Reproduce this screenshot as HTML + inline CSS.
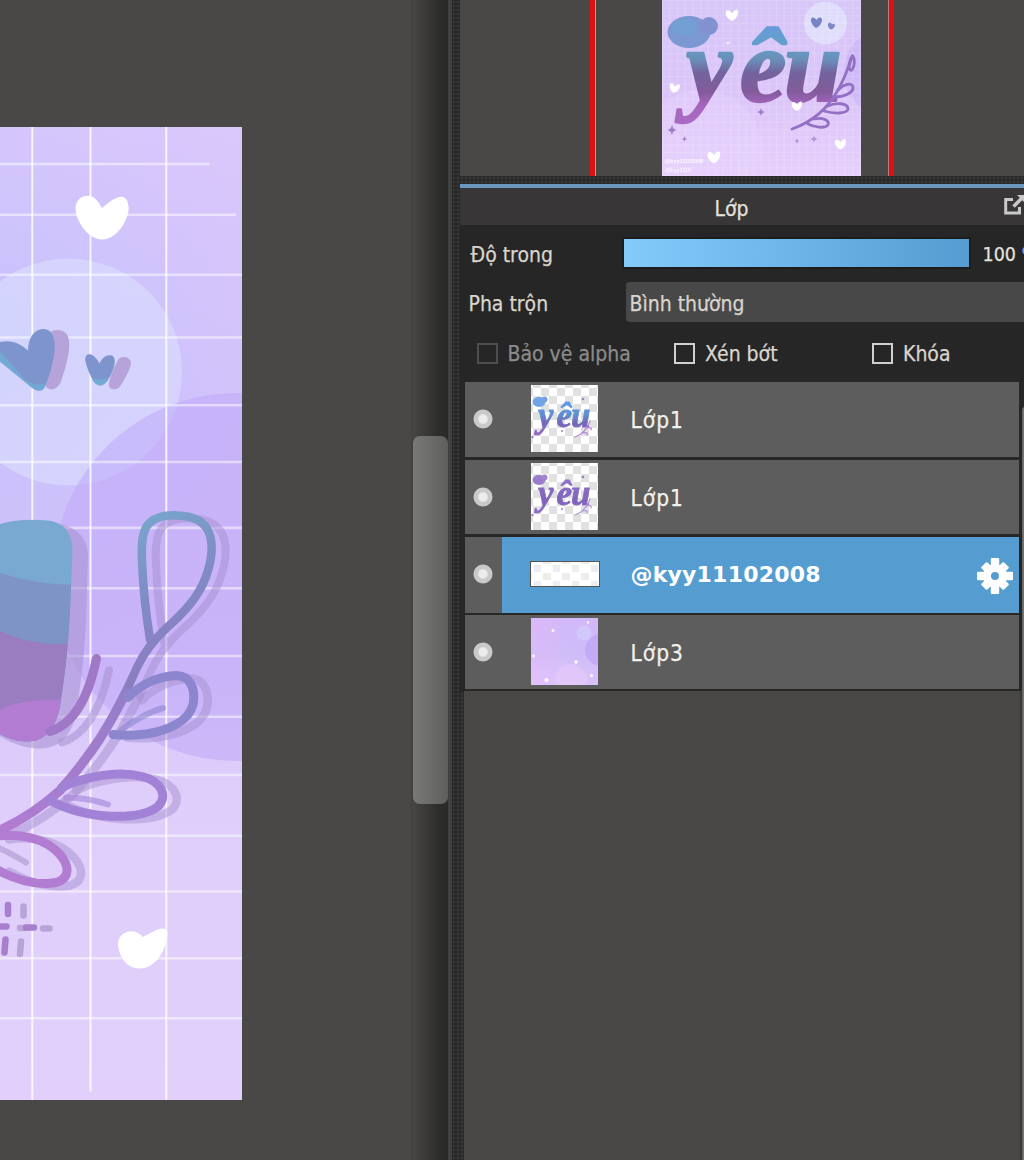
<!DOCTYPE html>
<html lang="vi">
<head>
<meta charset="utf-8">
<title>Lớp</title>
<style>
*{box-sizing:border-box;margin:0;padding:0}
html,body{width:1024px;height:1160px;overflow:hidden;background:#4a4846}
body{position:relative;font-family:"DejaVu Sans Condensed","Liberation Sans",sans-serif;font-size:21px;color:#d9d5cd}
.abs{position:absolute}
.t{position:absolute;white-space:nowrap;line-height:26px;height:26px;margin-top:.7px;-webkit-text-stroke:.25px currentColor}
/* scrollbar column */
#trackedge{left:411px;top:0;width:3px;height:1160px;background:#43423f}
#track{left:413px;top:0;width:35px;height:1160px;background:linear-gradient(90deg,#474644 0%,#3a3937 35%,#2d2d2b 75%,#292928 100%)}
#thumb{left:413px;top:436px;width:35px;height:368px;border-radius:7px;background:linear-gradient(90deg,#787876 0%,#6c6c6a 50%,#5e5e5c 100%)}
#lightline{left:448px;top:0;width:4px;height:1160px;background:#414141}
#dots{left:452px;top:0;width:11.5px;height:1160px;background-color:#272727;background-image:radial-gradient(circle at 2px 2px,rgba(255,255,255,.07) 0 1.2px,transparent 1.8px);background-size:4px 4px}
/* panel */
#navbg{left:460px;top:0;width:564px;height:176px;background:#4a4846}
#hdots{left:456px;top:175.5px;width:568px;height:8.5px;background-color:#272727;background-image:radial-gradient(circle at 2px 2px,rgba(255,255,255,.07) 0 1.2px,transparent 1.8px);background-size:4px 4px}
#blue{left:460px;top:184px;width:564px;height:3.5px;background:#6a97bf}
#title{left:460px;top:187.5px;width:564px;height:38px;background:#383636}
#ctrl{left:460px;top:225px;width:564px;height:157px;background:#272626}
#listbg{left:460px;top:379px;width:564px;height:312px;background:#272727}
#below{left:464px;top:691px;width:560px;height:469px;background:#4a4846}
.row{position:absolute;left:465px;width:553.5px;height:75px;background:#5d5d5d}
.eye{position:absolute;left:7.5px;top:27px;width:20px;height:20px;border-radius:50%;background:radial-gradient(circle,#ececec 0 4px,#c9c9c9 5.5px 9px,rgba(201,201,201,0) 10px)}
.thumb{position:absolute;left:66px;top:3px;width:67px;height:67px;overflow:hidden}
.lname{position:absolute;left:165.500px;top:23px;letter-spacing:1px;-webkit-text-stroke:.25px currentColor;font-size:22.5px;line-height:30px;color:#f2f0ea;white-space:nowrap}
.cb{position:absolute;width:21px;height:21px;border:2.5px solid #d2d0cc}
</style>
</head>
<body>
<!-- canvas artwork -->
<div class="abs" id="art" style="left:0;top:126.5px;width:241.5px;height:973px;overflow:hidden;background:#d8c8fa">
<!--ARTS--><svg class="abs" style="left:0;top:0" width="241.5" height="973" viewBox="0 126.5 241.5 973">
<defs>
<linearGradient id="bgv" x1="0" y1="126" x2="0" y2="1100" gradientUnits="userSpaceOnUse">
<stop offset="0" stop-color="#dbc8fb"/><stop offset=".3" stop-color="#d3c2fa"/><stop offset=".55" stop-color="#d4c2fa"/><stop offset=".68" stop-color="#dfcefb"/><stop offset="1" stop-color="#e2d0fb"/>
</linearGradient>
<radialGradient id="bgh" cx="-20" cy="330" r="330" gradientUnits="userSpaceOnUse">
<stop offset="0" stop-color="#b4beff" stop-opacity=".45"/><stop offset=".6" stop-color="#bcc0ff" stop-opacity=".22"/><stop offset="1" stop-color="#c8c0ff" stop-opacity="0"/>
</radialGradient>
<linearGradient id="ushape" x1="0" y1="519" x2="0" y2="742" gradientUnits="userSpaceOnUse">
<stop offset="0" stop-color="#78aad2"/><stop offset="1" stop-color="#78aad2"/>
</linearGradient>
<linearGradient id="loopg" x1="143" y1="520" x2="212" y2="640" gradientUnits="userSpaceOnUse">
<stop offset="0" stop-color="#78a4cb"/><stop offset=".45" stop-color="#7f8ec6"/><stop offset="1" stop-color="#8b7cc2"/>
</linearGradient>
<linearGradient id="stemg" x1="150" y1="640" x2="0" y2="830" gradientUnits="userSpaceOnUse">
<stop offset="0" stop-color="#8a80c6"/><stop offset=".5" stop-color="#a07ccc"/><stop offset="1" stop-color="#b27cd2"/>
</linearGradient>
<clipPath id="uclip"><path id="upath" d="M-10 528 C5 519 30 518 48 520 C66 522 73 535 72.5 552 L70 610 C68 650 64 680 60 705 C56 728 44 741 28 741 C14 741 4 736 -10 728 Z"/></clipPath>
</defs>
<rect x="0" y="126" width="242" height="975" fill="url(#bgv)"/>
<rect x="0" y="126" width="242" height="975" fill="url(#bgh)"/>
<!-- big soft circles -->
<circle cx="68.5" cy="371.5" r="113.5" fill="#dadeff" fill-opacity=".62"/>
<circle cx="236.5" cy="576.5" r="184" fill="#c0a8f8" fill-opacity=".55"/>
<!-- grid -->
<g stroke="#fff" stroke-opacity=".8" stroke-width="2" fill="none">
<path d="M32.3 126V1100M90.5 126V1091M166.3 126V1100"/>
</g>
<g stroke="#fff" stroke-opacity=".5" stroke-width="2.6" fill="none">
<path d="M0 163.5H209.5M0 214.2H236M0 274.2H242M0 337H242M0 404.7H242M0 461.5H242M0 527.4H242M0 587.7H242M0 655.5H242M0 716.3H242M0 774.5H242M0 835.2H242M0 891H242M0 957.7H242M0 1017.7H242"/>
</g>
<!-- white hearts -->
<path id="wh" d="M102.2 207.7 C99 202 95 196 89.5 195.4 C81 194.5 75 201 75.6 209 C76 216 79 221 82 226 C87 233 94 239 102.2 239 C111 239 118 232 122.5 225.5 C127 218 129.5 211 128.4 205 C127.5 198 124 196 121 196.3 C114 197 107 203 102.2 207.7Z" fill="#fff"/>
<path d="M143 936.4 C140 933 136 930.5 131 930.7 C123 931 117.5 937 118 944.5 C118.5 950 120 954 122.5 958 C126 964 132 968 139.5 968 C147 968 153 964 157.5 959 C162 953 164.5 948 165.5 943 C167.500 937 169 930.500 165.500 928.500 C162 927 156.500 929 152.500 931.500 C148.500 933.500 145.500 935 143 936.4Z" fill="#fff"/>
<!-- small blue hearts (shadow then main) -->
<g fill="#b5a3d9">
<path d="M47 335 C52 328 62 328 67 334 C72 342 68 360 62 378 C60 386 54 391 48 388 C44 386 44 378 45 370Z"/>
<path d="M119 358 C124 355 130 357 131 362 C131 368 124 380 120 386 C117 390 111 390 109 386 C108 380 114 366 119 358Z"/>
</g>
<path d="M-6 344 C4 338 18 340 28 350 C28 338 34 328 44 328.5 C54 329 56 342 54 354 C52 368 48 380 44 388 C40 392 34 390 28 384 C16 374 2 362 -6 356Z" fill="#7d95cc"/>
<path d="M-6 344 C0 350 10 362 22 376 C30 384 38 386 46 382 C45 386 44 388 43 389 C40 392 34 390 28 384 C16 374 2 362 -6 358Z" fill="#6fb0d6" fill-opacity=".7"/>
<path d="M85.5 361 C84 354 89 352.5 93 355 C96 357 98 360 99.5 363 C102 357 107 353.5 112 355 C116 357 115 364 113 369 C110 377 106 384 101 385 C96 385 93 381 91 376 C88 370 86.5 365 85.5 361Z" fill="#7d95cc"/>
<path d="M92 377 C96 380 104 380 108 376 C106 381 104 384.5 101 385 C97 385 94 382 92 377Z" fill="#6fb0d6" fill-opacity=".8"/>
<!-- u-shape shadow -->
<path d="M40 524 C66 520 88 530 88 556 L86 620 C84 660 80 690 76 712 C72 736 58 748 40 748 C26 748 14 744 0 736 L0 720 L40 720Z" fill="#a58fd0" fill-opacity=".55"/>
<!-- u-shape -->
<g clip-path="url(#uclip)">
<rect x="-10" y="510" width="100" height="240" fill="#79a9d1"/>
<path d="M-10 569 C20 580 50 585 80 584 V760 H-10Z" fill="#7e93c6"/>
<path d="M-10 625 C15 640 45 646 80 643 V760 H-10Z" fill="#9a7cc0"/>
<path d="M-10 715 C10 700 40 698 80 700 V760 H-10Z" fill="#b27cd2"/>
</g>
<!-- hook tail of u : shadow + main -->
<path d="M62 742 C84 735 100 712 109 670" fill="none" stroke="#a58fd0" stroke-opacity=".55" stroke-width="8" stroke-linecap="round"/>
<path d="M50 731 C72 724 88 700 96.500 658" fill="none" stroke="#a078c8" stroke-width="9" stroke-linecap="round"/>
<!-- loop + stem shadows -->
<g fill="none" stroke="#a58fd0" stroke-opacity=".5" stroke-linecap="round" stroke-linejoin="round" transform="translate(14 3)">
<path d="M150 639 C147 620 143 590 142 560 C141 540 143 528 150 522 C158 515 170 514.5 178 515 C192 515.5 204 520 209 532 C214 545 211 562 206 576 C199 596 184 612 166 628 C154 639 145 650 137 667 C133 676 129 684 125.6 692" stroke-width="8"/>
<path d="M125.6 692 C118 708 110 722 100 738 C88 756 76 772 60 790 C40 808 18 822 -5 832" stroke-width="9"/>
<path d="M128 697 C138 686 156 676 176 675 C190 675 196 688 193 704 C189 720 170 730 146 733.5 C134 735 122 735 113 734" stroke-width="8.5"/>
<path d="M62 787 C84 776 118 770 142 776 C162 781 168 796 158 806 C140 820 88 820 50 800" stroke-width="8.5"/>
<path d="M-5 836 C20 832 46 838 60 854 C70 866 70 878 56 882 C36 886 12 878 -5 868" stroke-width="8.5"/>
</g>
<!-- loop + stem main -->
<g fill="none" stroke-linecap="round" stroke-linejoin="round">
<path d="M150 639 C147 620 143 590 142 560 C141 540 143 528 150 522 C158 515 170 514.5 178 515 C192 515.5 204 520 209 532 C214 545 211 562 206 576 C199 596 184 612 166 628 C154 639 145 650 137 667 C133 676 129 684 125.6 692" stroke="url(#loopg)" stroke-width="8.5"/>
<path d="M125.6 692 C118 708 110 722 100 738 C88 756 76 772 60 790 C40 808 18 822 -5 832" stroke="url(#stemg)" stroke-width="9.5"/>
<path d="M128 697 C138 686 156 676 176 675 C190 675 196 688 193 704 C189 720 170 730 146 733.5 C134 735 122 735 113 734" stroke="#8c86cf" stroke-width="9"/>
<path d="M121 729.5 C134 720 150 711 163 707.5" stroke="#8c86cf" stroke-opacity=".6" stroke-width="6"/>
<path d="M62 787 C84 776 118 770 142 776 C162 781 168 796 158 806 C140 820 88 820 50 800" stroke="#a182d6" stroke-width="9"/>
<path d="M66 797 C80 797 96 800 108 804" stroke="#a182d6" stroke-opacity=".6" stroke-width="6"/>
<path d="M-5 836 C20 832 46 838 60 854 C70 866 70 878 56 882 C36 886 12 878 -5 868" stroke="#b17cd2" stroke-width="9"/>
<path d="M-5 846 C6 850 16 856 26 862" stroke="#b9a4d8" stroke-opacity=".8" stroke-width="6"/>
</g>
<!-- sparkle dashes -->
<g fill="none" stroke-linecap="round" stroke-width="6.5">
<path d="M23.5 906V915M21 941L20 953.500M43 928H49.500M20 927.500H24" stroke="#b9a4d8"/>
<path d="M8 904.500V913.500M5.5 939L4.5 952M-2 926H6.500M26 927H34" stroke="#a87fcd"/>
</g>
</svg>
<!--ARTE-->
</div>

<!-- scrollbar -->
<div class="abs" id="trackedge"></div>
<div class="abs" id="track"></div>
<div class="abs" id="thumb"></div>
<div class="abs" id="lightline"></div>
<div class="abs" id="dots"></div>

<!-- navigator -->
<div class="abs" id="navbg"></div>
<div class="abs" style="left:590px;top:0;width:4.700px;height:176px;background:#e01010"></div>
<div class="abs" style="left:594.500px;top:0;width:1.2px;height:176px;background:#c9a0a0"></div>
<div class="abs" style="left:889px;top:0;width:5px;height:176px;background:#e01010"></div>
<div class="abs" style="left:888px;top:0;width:1.2px;height:176px;background:#b08080"></div>
<div class="abs" id="nav" style="left:661.5px;top:0;width:199.5px;height:175.5px;overflow:hidden;background:#d8c4f8">
<!--NAVS--><svg class="abs" style="left:0;top:0" width="199.5" height="175.5" viewBox="0 0 199.5 175.5">
<defs>
<linearGradient id="nbg" x1="0" y1="0" x2="0" y2="176" gradientUnits="userSpaceOnUse"><stop offset="0" stop-color="#d7c6f8"/><stop offset=".55" stop-color="#dcc6f9"/><stop offset="1" stop-color="#e6cffb"/></linearGradient>
<linearGradient id="ytxt" x1="0" y1="18" x2="0" y2="136" gradientUnits="userSpaceOnUse">
<stop offset="0" stop-color="#6a98e2"/><stop offset=".24" stop-color="#62a0c8"/><stop offset=".36" stop-color="#6b8cb6"/><stop offset=".46" stop-color="#72649e"/><stop offset=".62" stop-color="#825a9a"/><stop offset=".74" stop-color="#a565bd"/><stop offset="1" stop-color="#b070c8"/>
</linearGradient>
<pattern id="ngrid" width="7.6" height="7.6" patternUnits="userSpaceOnUse"><path d="M0 .5H7.6M.5 0V7.6" stroke="#fff" stroke-opacity=".16" stroke-width="1" fill="none"/></pattern>
<filter id="nblur" x="-5%" y="-5%" width="110%" height="110%"><feGaussianBlur stdDeviation=".7"/></filter>
<path id="nh" d="M0 -1.2C-1 -3.2 -3 -4.4 -4.4 -3.4C-5.8 -2 -4.6 1 -3 2.8C-1.8 4 -.6 4.6 .2 4.6C1.4 4.4 3 3 4 1C5 -1 5.2 -3.6 4 -4.2C2.6 -4.6 1 -3 0 -1.2Z"/>
<path id="nstar" d="M0 -5C.6 -1.6 1.6 -.6 5 0C1.6 .6 .6 1.6 0 5C-.6 1.6 -1.6 .6 -5 0C-1.6 -.6 -.6 -1.6 0 -5Z"/>
</defs>
<rect width="200" height="176" fill="url(#nbg)"/>
<circle cx="228" cy="72" r="46" fill="#c6b0f8" fill-opacity=".55"/>
<circle cx="40" cy="150" r="60" fill="#e8d4fc" fill-opacity=".35"/>
<circle cx="163.5" cy="23" r="21.5" fill="#e2e2fd" fill-opacity=".8"/>
<rect width="200" height="176" fill="url(#ngrid)"/>
<g filter="url(#nblur)">
<ellipse cx="27" cy="32" rx="21.5" ry="16" fill="#7b98d2"/>
<circle cx="47" cy="26" r="9" fill="#8292d0"/>
<ellipse cx="22" cy="27" rx="12" ry="8" fill="#6fa4d4" fill-opacity=".7"/>
<path d="M149 19C150 16.5 153 17 154.5 20C156 17 159 16.5 160 19C160.5 23 157 27 154 28C151 26 148.500 22.500 149 19Z" fill="#7484c4"/>
<path d="M166 24C167 22 169.500 22.500 170 24.500C171 23 173 23.500 173 25.500C172.500 28 170 29.500 168.500 29.500C167 28.500 165.500 26 166 24Z" fill="#7e88c4"/>
<text x="24 78 122" y="101" font-family="'Liberation Serif','DejaVu Serif',serif" font-style="italic" font-weight="bold" font-size="104" fill="url(#ytxt)" stroke="url(#ytxt)" stroke-width="2.5" stroke-linejoin="round">yêu</text>
<g fill="none" stroke="#9470c4" stroke-width="2.8" stroke-linecap="round">
<path d="M130 129C150 122 166 108 176 90C184 76 188 62 190.500 56"/>
<path d="M176 90C182 84 190 82 191 87C191.500 93 182 97 172 97"/>
<path d="M166 106C174 102 186 103 186 109C185 114 172 114 162 111"/>
<path d="M152 119C160 117 168 120 166 125C163 129 152 127 146 124"/>
<path d="M190.500 56C186 62 186 72 190 70C193 66 193 58 190.500 56Z"/>
</g>
<g fill="#a07cc8"><use href="#nstar" transform="translate(99 112) scale(.85)"/><use href="#nstar" transform="translate(10 130) scale(1.1)"/><use href="#nstar" transform="translate(22.500 139) scale(.6)"/><use href="#nstar" transform="translate(135 141) scale(.6)" fill-opacity=".7"/><use href="#nstar" transform="translate(152 139) scale(.8)" fill-opacity=".7"/></g>
<g fill="#fff"><use href="#nh" transform="translate(70 15) scale(1.25)"/><use href="#nh" transform="translate(12.500 88) scale(1.05) rotate(15)"/><use href="#nh" transform="translate(135 106) scale(1.05)"/><use href="#nh" transform="translate(178.500 144) scale(1.15)"/><use href="#nh" transform="translate(52 157) scale(1.3)"/><use href="#nh" transform="translate(66 43) scale(.35)" fill-opacity=".7"/></g>
</g>
<text x="3" y="163" font-family="'Liberation Sans',sans-serif" font-size="5.5" font-weight="bold" fill="#fff" fill-opacity=".85" filter="url(#nblur)">@kyy11102008</text>
<text x="3" y="171.5" font-family="'Liberation Sans',sans-serif" font-size="5.5" font-weight="bold" fill="#fff" fill-opacity=".75" filter="url(#nblur)">@kyy1110</text>
</svg>
<!--NAVE-->
</div>
<div class="abs" id="hdots"></div>
<div class="abs" id="blue"></div>

<!-- layer panel -->
<div class="abs" id="title"></div>
<div class="abs" id="ctrl"></div>
<div class="abs" id="listbg"></div>
<div class="abs" id="below"></div>

<div class="t" style="left:714.5px;top:195.5px;color:#e4e2dc">Lớp</div>
<svg class="abs" style="left:1000px;top:190px" width="24" height="30" viewBox="0 0 24 30">
<path d="M13 9.5H5.7V23H19.5V17" fill="none" stroke="#c9c9c9" stroke-width="3"/>
<path d="M13.5 16.5L24 6" fill="none" stroke="#c9c9c9" stroke-width="3.4"/>
<path d="M17 5H25V13Z" fill="#c9c9c9"/>
</svg>

<div class="t" style="left:470.5px;top:241.5px">Độ trong</div>
<div class="abs" style="left:621.5px;top:236.5px;width:349px;height:32px;background:#1d1d1d"></div>
<div class="abs" style="left:623.5px;top:238.5px;width:345.5px;height:28.5px;background:linear-gradient(90deg,#84cbfc 0%,#6fb6ea 45%,#559cd1 100%)"></div>
<div class="t" style="left:982.5px;top:241.5px;font-size:19.5px;color:#e4e2dc">100</div>
<div class="t" style="left:1021.5px;top:241.5px;font-size:19.5px;color:#8fa0d8">%</div>

<div class="t" style="left:468.5px;top:290.5px">Pha trộn</div>
<div class="abs" style="left:625.5px;top:281.5px;width:410px;height:40.5px;border-radius:4px;background:#484848"></div>
<div class="t" style="left:629.5px;top:290.5px">Bình thường</div>

<div class="cb" style="left:477px;top:343px;border-color:#4e4e4e;border-width:2px"></div>
<div class="t" style="left:507.5px;top:340.5px;color:#8b8b8b">Bảo vệ alpha</div>
<div class="cb" style="left:673.5px;top:343px"></div>
<div class="t" style="left:705px;top:340.5px">Xén bớt</div>
<div class="cb" style="left:872px;top:343px"></div>
<div class="t" style="left:903px;top:340.5px">Khóa</div>

<!-- layers -->
<div class="row" style="top:381.500px;height:75.500px">
  <div class="eye"></div>
  <div class="thumb" id="th1"><!--TH1S--><svg width="67" height="67" viewBox="0 0 67 67" style="display:block">
<defs>
<pattern id="chk" width="16" height="16" patternUnits="userSpaceOnUse" x="2" y="3"><rect width="16" height="16" fill="#fff"/><rect x="8" width="8" height="8" fill="#e1e1e1"/><rect y="8" width="8" height="8" fill="#e1e1e1"/></pattern>
<linearGradient id="t1g" x1="0" y1="18" x2="0" y2="58" gradientUnits="userSpaceOnUse"><stop offset="0" stop-color="#5f9be6"/><stop offset=".3" stop-color="#5f8ed0"/><stop offset=".5" stop-color="#7468b8"/><stop offset=".72" stop-color="#8a64c0"/><stop offset="1" stop-color="#b878d8"/></linearGradient>
<filter id="tblur" x="-5%" y="-5%" width="110%" height="110%"><feGaussianBlur stdDeviation=".45"/></filter>
</defs>
<rect width="67" height="67" fill="url(#chk)"/>
<g filter="url(#tblur)">
<ellipse cx="8" cy="17" rx="6.500" ry="5" fill="#6fa4e4"/><circle cx="13.500" cy="14.500" r="3" fill="#78a0e0"/>
<text x="7 25.500 40" y="41.500" font-family="'Liberation Serif','DejaVu Serif',serif" font-style="italic" font-weight="bold" font-size="35" fill="url(#t1g)" stroke="url(#t1g)" stroke-width=".8">yêu</text>
<path d="M44 52C50 50 56 44 59 36M52 48C55 47 57 48 56 50M56 43C59 42 61 43 60 45" fill="none" stroke="#b488d8" stroke-width="1.2" stroke-linecap="round"/>
<circle cx="52" cy="14" r="1.300" fill="#8a8ad0"/><circle cx="31" cy="46" r="1" fill="#a080d0"/><circle cx="1.500" cy="52" r="1.200" fill="#a080d0"/>
</g>
</svg>
<!--TH1E--></div>
  <div class="lname">Lớp1</div>
</div>
<div class="row" style="top:459.700px;height:74.500px">
  <div class="eye"></div>
  <div class="thumb" id="th2"><!--TH2S--><svg width="67" height="67" viewBox="0 0 67 67" style="display:block">
<defs>
<pattern id="chk2" width="16" height="16" patternUnits="userSpaceOnUse" x="2" y="3"><rect width="16" height="16" fill="#fff"/><rect x="8" width="8" height="8" fill="#e1e1e1"/><rect y="8" width="8" height="8" fill="#e1e1e1"/></pattern>
<linearGradient id="t2g" x1="0" y1="18" x2="0" y2="58" gradientUnits="userSpaceOnUse"><stop offset="0" stop-color="#8a72c6"/><stop offset=".3" stop-color="#8468c0"/><stop offset=".5" stop-color="#7e64ba"/><stop offset=".72" stop-color="#8a68c2"/><stop offset="1" stop-color="#a884d4"/></linearGradient>
<filter id="tblur2" x="-5%" y="-5%" width="110%" height="110%"><feGaussianBlur stdDeviation=".45"/></filter>
</defs>
<rect width="67" height="67" fill="url(#chk2)"/>
<g filter="url(#tblur2)">
<ellipse cx="8" cy="17" rx="6.500" ry="5" fill="#9a7ccc"/><circle cx="13.500" cy="14.500" r="3" fill="#a084d0"/>
<text x="7 25.500 40" y="41.500" font-family="'Liberation Serif','DejaVu Serif',serif" font-style="italic" font-weight="bold" font-size="35" fill="url(#t2g)" stroke="url(#t2g)" stroke-width=".8">yêu</text>
<path d="M44 52C50 50 56 44 59 36M52 48C55 47 57 48 56 50M56 43C59 42 61 43 60 45" fill="none" stroke="#b49cd8" stroke-width="1.2" stroke-linecap="round"/>
<circle cx="52" cy="14" r="1.300" fill="#9080c8"/><circle cx="31" cy="46" r="1" fill="#a080d0"/><circle cx="1.500" cy="52" r="1.200" fill="#a080d0"/>
</g>
</svg>
<!--TH2E--></div>
  <div class="lname">Lớp1</div>
</div>
<div class="row" style="top:537px;height:75.800px">
  <div class="eye"></div>
  <div class="abs" style="left:37px;top:0;width:516.5px;height:100%;background:#559dd1"></div>
  <div class="abs" id="th3" style="left:65px;top:23.5px;width:69.5px;height:26.5px;border:1.5px solid #555;background:#fff;overflow:hidden"><!--TH3S--><svg width="67" height="24" viewBox="0 0 67 24" style="display:block"><defs><pattern id="chk3" width="19" height="16" patternUnits="userSpaceOnUse" x="3" y="3"><rect width="19" height="16" fill="#fff"/><rect x="0" y="0" width="7" height="7" fill="#eceef4"/><rect x="9" y="8" width="8" height="7" fill="#f0ecec"/></pattern></defs><rect width="67" height="24" fill="url(#chk3)"/></svg>
<!--TH3E--></div>
  <div class="lname" style="font-family:'DejaVu Sans','Liberation Sans',sans-serif;font-weight:bold;font-size:22px;color:#fff;letter-spacing:.2px;top:22.5px;-webkit-text-stroke:0">@kyy11102008</div>
  <svg class="abs" style="left:511px;top:19.5px" width="38" height="38" viewBox="-19 -19 38 38">
    <g fill="#fff">
      <circle r="11.8"/>
      <rect x="-4.200" y="-18" width="8.400" height="36" rx="1"/><rect x="-18" y="-4.200" width="36" height="8.400" rx="1"/>
      <g transform="rotate(45)"><rect x="-4.200" y="-16" width="8.400" height="32" rx="1.200"/><rect x="-16" y="-4.200" width="32" height="8.400" rx="1.200"/></g>
    </g>
    <circle r="4" fill="#559dd1"/>
  </svg>
</div>
<div class="row" style="top:615.300px;height:73.700px">
  <div class="eye"></div>
  <div class="thumb" id="th4" style="background:#d4bdf7"><!--TH4S--><svg width="67" height="67" viewBox="0 0 67 67" style="display:block"><defs>
<linearGradient id="t4g" x1="0" y1="0" x2="0" y2="67" gradientUnits="userSpaceOnUse"><stop offset="0" stop-color="#d6b6f8"/><stop offset=".5" stop-color="#d0bcf8"/><stop offset="1" stop-color="#e2c6fa"/></linearGradient>
<linearGradient id="t4h" x1="0" y1="0" x2="67" y2="0" gradientUnits="userSpaceOnUse"><stop offset="0" stop-color="#e8b8f8" stop-opacity=".35"/><stop offset=".55" stop-color="#c8c0fa" stop-opacity=".25"/><stop offset="1" stop-color="#c8b8fa" stop-opacity=".3"/></linearGradient>
<filter id="tblur4" x="-5%" y="-5%" width="110%" height="110%"><feGaussianBlur stdDeviation=".6"/></filter></defs>
<rect width="67" height="67" fill="url(#t4g)"/><rect width="67" height="67" fill="url(#t4h)"/>
<g filter="url(#tblur4)">
<circle cx="53" cy="15" r="7.500" fill="#d2ccfb" fill-opacity=".8"/>
<circle cx="70" cy="32" r="16" fill="#bfa6f6" fill-opacity=".75"/>
<circle cx="8" cy="20" r="22" fill="#dcb8f8" fill-opacity=".3"/>
<circle cx="40" cy="62" r="16" fill="#ecccfb" fill-opacity=".45"/>
<g fill="#fff" fill-opacity=".9"><circle cx="22" cy="12.500" r="1.600"/><circle cx="2.500" cy="38" r="1.400"/><circle cx="45" cy="44" r="1.700"/><circle cx="15.500" cy="62" r="2"/><circle cx="60.500" cy="57.500" r="1.500"/><circle cx="57" cy="4.500" r="1.200"/></g>
</g></svg>
<!--TH4E--></div>
  <div class="lname">Lớp3</div>
</div>
<!-- right edge of list -->
<div class="abs" style="left:1018.5px;top:379px;width:5.5px;height:312px;background:#272727"></div>
<div class="abs" style="left:1019.7px;top:691px;width:2.5px;height:469px;background:#3a3938"></div>
<div class="abs" style="left:1022px;top:407px;width:6px;height:760px;border-radius:3px 0 0 0;background:linear-gradient(90deg,#626260,#787876 2px)"></div>
</body>
</html>
